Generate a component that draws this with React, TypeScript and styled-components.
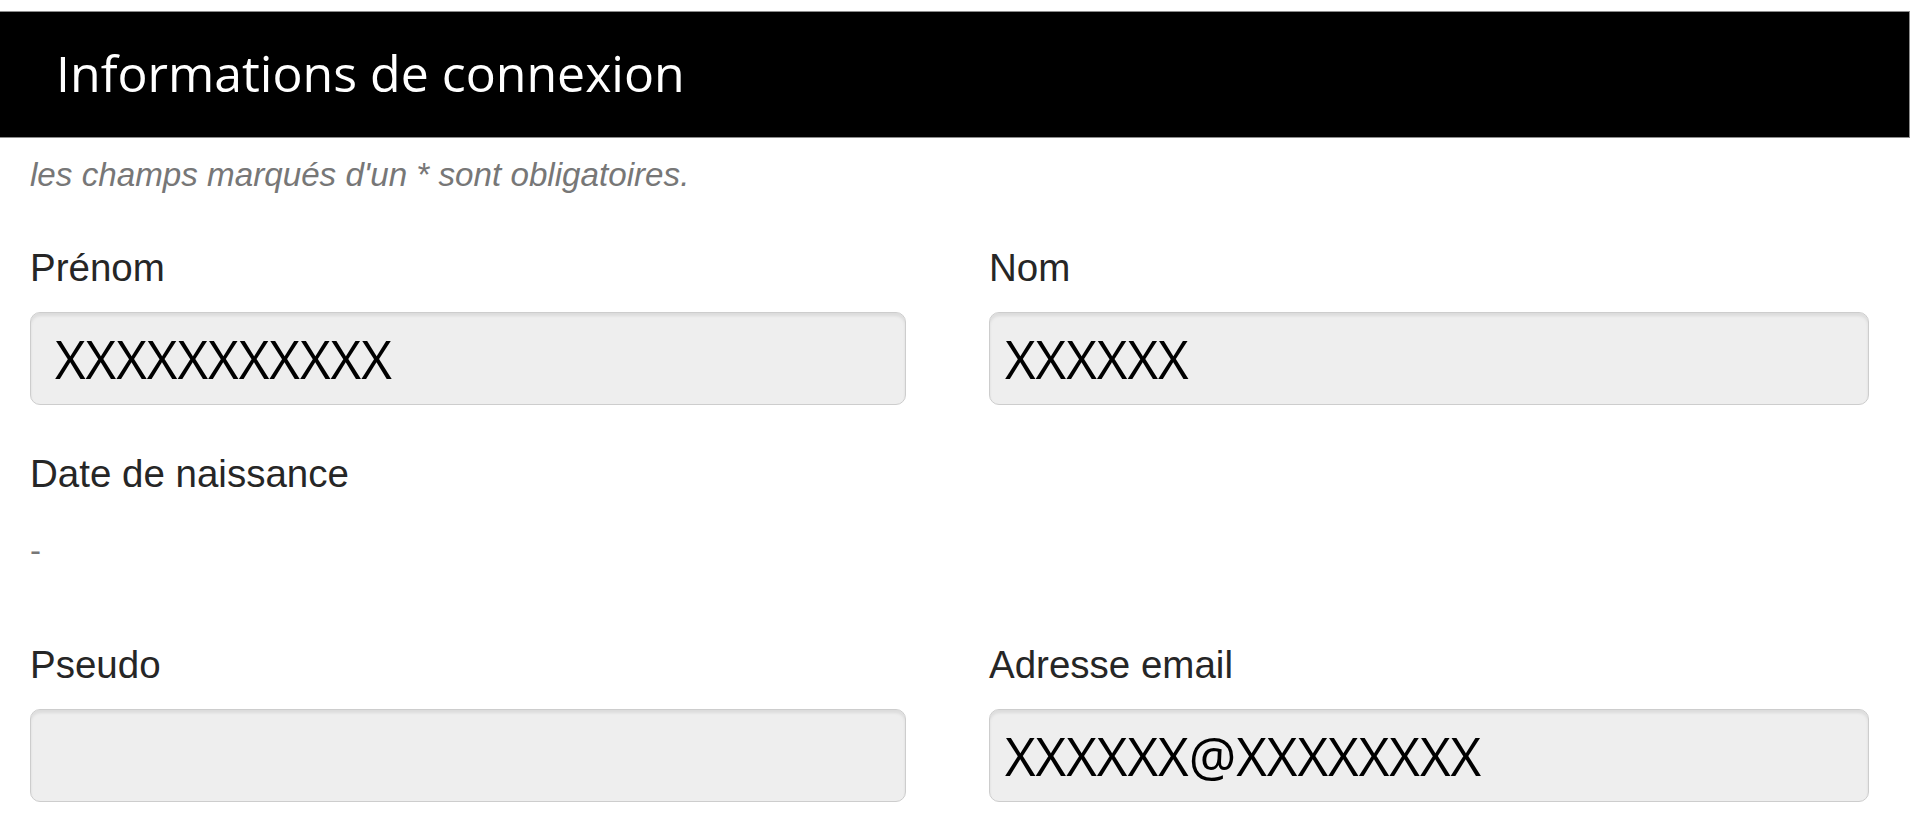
import styled, { createGlobalStyle } from 'styled-components';

const GlobalStyle = createGlobalStyle`
  html,
  body {
    margin: 0;
    padding: 0;
    background: #fff;
  }

  * {
    box-sizing: border-box;
  }
`;

const fields = [
  { label: 'Prénom', value: 'XXXXXXXXXXX', inset: 24 },
  { label: 'Nom', value: 'XXXXXX', inset: 15 },
];

const accountFields = [
  { label: 'Pseudo', value: '', inset: 24 },
  { label: 'Adresse email', value: 'XXXXXX@XXXXXXXX', inset: 15 },
];

const App = () => {
  return (
    <StPage>
      <GlobalStyle />
      <StHeader>
        <h1>Informations de connexion</h1>
      </StHeader>

      <StBody>
        <StNotice>les champs marqués d'un * sont obligatoires.</StNotice>

        <StRow $top={51}>
          {fields.map((field) => (
            <StField key={field.label}>
              <StLabel>{field.label}</StLabel>
              <StInput type="text" readOnly defaultValue={field.value} $inset={field.inset} />
            </StField>
          ))}
        </StRow>

        <StBirth>
          <StLabel>Date de naissance</StLabel>
          <StEmpty>-</StEmpty>
        </StBirth>

        <StRow $top={72}>
          {accountFields.map((field) => (
            <StField key={field.label}>
              <StLabel>{field.label}</StLabel>
              <StInput type="text" readOnly defaultValue={field.value} $inset={field.inset} />
            </StField>
          ))}
        </StRow>
      </StBody>
    </StPage>
  );
};

export default App;

const StPage = styled.main`
  width: 1920px;
  min-height: 840px;
  padding-top: 11px;
`;

const StHeader = styled.header`
  display: flex;
  align-items: center;

  width: 1911px;
  height: 127px;
  margin-left: -1px;
  padding: 0 0 4px 56px;
  border: 1px solid #8c8c8c;
  background: #000;

  h1 {
    margin: 0;
    font-family: 'Open Sans', 'Noto Sans', sans-serif;
    font-size: 50px;
    font-weight: 400;
    line-height: 1.36;
    color: #fff;
  }
`;

const StBody = styled.section`
  padding: 0 51px 0 30px;
`;

const StNotice = styled.p`
  margin: 17px 0 0;

  font-family: 'Liberation Sans', Arial, sans-serif;
  font-size: 33.2px;
  font-style: italic;
  line-height: 40px;
  color: #777;
`;

const StRow = styled.div<{ $top: number }>`
  display: grid;
  grid-template-columns: 876px 1fr;
  column-gap: 83px;

  margin-top: ${({ $top }) => $top}px;
`;

const StField = styled.div`
  display: flex;
  flex-direction: column;
  gap: 22px;
`;

const StLabel = styled.label`
  display: block;

  font-family: 'Liberation Sans', Arial, sans-serif;
  font-size: 38.5px;
  line-height: 44px;
  color: #262626;
`;

const StInput = styled.input<{ $inset: number }>`
  width: 100%;
  height: 93px;
  padding: 0 ${({ $inset }) => $inset}px 0;
  border: 1px solid #cdcdcd;
  border-radius: 10px;
  box-shadow: inset 0 3px 3px rgba(0, 0, 0, 0.08);
  background: #eee;

  font-family: 'Open Sans', 'Noto Sans', sans-serif;
  font-size: 53px;
  color: #000;
  outline: none;
`;

const StBirth = styled.div`
  margin-top: 47px;
`;

const StEmpty = styled.p`
  margin: 35px 0 0;

  font-family: 'Liberation Sans', Arial, sans-serif;
  font-size: 33px;
  line-height: 40px;
  color: #777;
`;
